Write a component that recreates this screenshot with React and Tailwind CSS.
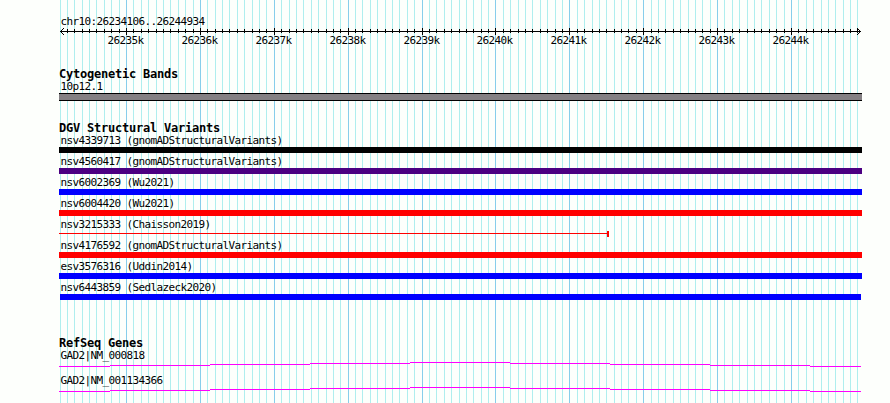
import React from 'react';

const START = 26234106;
const END = 26244934;
const LEFT = 60;
const SPAN = 800;

const toX = (pos) => Math.round(LEFT + ((pos - START) * SPAN) / (END - START));

// one tick every 100 bp, a major one every 1000 bp
const ticks = [];
for (let pos = 26234100; pos <= END; pos += 100) {
  ticks.push({ pos, x: toX(pos), major: pos % 1000 === 0 });
}

const variants = [
  { id: 'nsv4339713', study: 'gnomADStructuralVariants', color: 'bg-black' },
  { id: 'nsv4560417', study: 'gnomADStructuralVariants', color: 'bg-[#4b0082]' },
  { id: 'nsv6002369', study: 'Wu2021', color: 'bg-[#0000ff]' },
  { id: 'nsv6004420', study: 'Wu2021', color: 'bg-[#ff0000]' },
  { id: 'nsv3215333', study: 'Chaisson2019', thin: true },
  { id: 'nsv4176592', study: 'gnomADStructuralVariants', color: 'bg-[#ff0000]' },
  { id: 'esv3576316', study: 'Uddin2014', color: 'bg-[#0000ff]' },
  { id: 'nsv6443859', study: 'Sedlazeck2020', color: 'bg-[#0000ff]', inset: true },
];

const genes = ['GAD2|NM_000818', 'GAD2|NM_001134366'];

const GridLines = () => (
  <svg className="absolute inset-0" width="890" height="403" shapeRendering="crispEdges">
    {ticks.map((t) => (
      <rect key={t.pos} x={t.x} y="0" width="1" height="403" fill={t.major ? '#87ceeb' : '#afeeee'} />
    ))}
  </svg>
);

const Ruler = () => (
  <svg className="block" width="890" height="20">
    <g shapeRendering="crispEdges">
      <rect x="60" y="3" width="801" height="1" />
      {ticks.slice(1).map((t) => (
        <rect key={t.pos} x={t.x} y={t.major ? 0 : 1} width="1" height={t.major ? 7 : 4} />
      ))}
      <path d="M61 2h1v1h-1zM62 1h1v1h-1zM63 0h1v1h-1zM61 4h1v1h-1zM62 5h1v1h-1zM63 6h1v1h-1z" />
      <path d="M859 2h1v1h-1zM858 1h1v1h-1zM857 0h1v1h-1zM859 4h1v1h-1zM858 5h1v1h-1zM857 6h1v1h-1z" />
    </g>
    {ticks.filter((t) => t.major).map((t) => (
      <text key={t.pos} x={t.x - 18.5} y="16">{t.pos / 1000}k</text>
    ))}
  </svg>
);

const Label = ({ children }) => (
  <div className="h-[13px] pl-[60.4px] whitespace-pre">{children}</div>
);

const TrackTitle = ({ children }) => (
  <h2 className="h-3 pl-[59px] font-bold text-[12px] tracking-[-0.225px] whitespace-pre">{children}</h2>
);

const Variant = ({ id, study, color, thin, inset }) => (
  <div className="h-[21px]">
    <Label>{id} ({study})</Label>
    {thin ? (
      <div className="ml-[59px] h-1.5 flex items-start">
        <div className="mt-0.5 w-[548px] h-px bg-[#ff0000]"></div>
        <div className="w-0.5 h-1.5 bg-[#ff0000]"></div>
      </div>
    ) : (
      <div className={`h-1.5 ${color} ${inset ? 'ml-[60px] w-[801px]' : 'ml-[59px] w-[803px]'}`}></div>
    )}
  </div>
);

const Gene = ({ name }) => (
  <div className="h-[25px]">
    <Label>{name}</Label>
    <svg className="block" width="890" height="5" fill="#ff00ff" shapeRendering="crispEdges">
      <rect x="59" y="4" width="51" height="1" />
      <rect x="110" y="3" width="100" height="1" />
      <rect x="210" y="2" width="100" height="1" />
      <rect x="310" y="1" width="100" height="1" />
      <rect x="410" y="0" width="100" height="1" />
      <rect x="510" y="1" width="100" height="1" />
      <rect x="610" y="2" width="100" height="1" />
      <rect x="710" y="3" width="100" height="1" />
      <rect x="810" y="4" width="51" height="1" />
    </svg>
  </div>
);

const App = () => {
  return (
    <div className="relative w-[890px] h-[403px] overflow-hidden bg-[#fdfffc] text-black font-['DejaVu_Sans_Mono',monospace] text-[11px] leading-[13px] tracking-[-0.622px]">
      <GridLines />
      <div className="relative pt-[15px]">
        <Label>chr10:26234106..26244934</Label>
        <Ruler />

        <section className="pt-5">
          <TrackTitle>Cytogenetic Bands</TrackTitle>
          <Label>10p12.1</Label>
          <div className="ml-[59px] w-[803px] h-2 bg-[#848083] border-y border-black"></div>
        </section>

        <section className="pt-[21px]">
          <TrackTitle>DGV Structural Variants</TrackTitle>
          {variants.map((v) => (
            <Variant key={v.id} {...v} />
          ))}
        </section>

        <section className="pt-[35px]">
          <TrackTitle>RefSeq Genes</TrackTitle>
          {genes.map((name) => (
            <Gene key={name} name={name} />
          ))}
        </section>
      </div>
    </div>
  );
};

export default App;
